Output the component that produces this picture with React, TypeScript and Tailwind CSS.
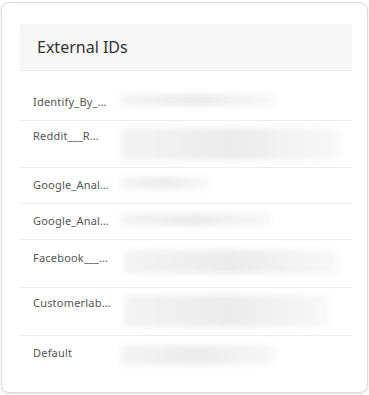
import React from 'react'

const rows = [
  { label: 'Identify_By_…', h: 'h-[12px]', w: 'w-[155px]', ml: '', pad: 'pt-[23px] pb-[10px]' },
  { label: 'Reddit___R…', h: 'h-[32px]', w: 'w-[222px]', ml: '', pad: 'py-[7px]' },
  { label: 'Google_Anal…', h: 'h-[12px]', w: 'w-[90px]', ml: '', pad: 'pt-[9px] pb-[10px]' },
  { label: 'Google_Anal…', h: 'h-[13px]', w: 'w-[150px]', ml: '', pad: 'pt-[9px] pb-[10px]' },
  { label: 'Facebook___…', h: 'h-[24px]', w: 'w-[226px]', ml: 'ml-[3px]', pad: 'pt-[10px] pb-[13px]' },
  { label: 'Customerlab…', h: 'h-[32px]', w: 'w-[206px]', ml: 'ml-[3px]', pad: 'pt-[7px] pb-[8px]' },
  { label: 'Default', h: 'h-[20px]', w: 'w-[155px]', ml: '', pad: 'pt-[9px] pb-[8px]' },
]

const App = () => {
  return (
    <div className="w-[369px] h-[395px] bg-white pt-[2px] pl-[1px]" style={{ fontFamily: '"Noto Sans", sans-serif' }}>
      <div className="w-[367px] h-[391px] border border-[#dcdcdc] rounded-[8px] shadow-[0_1px_2px_rgba(0,0,0,0.12)] pt-[21px] pl-[18px] pr-[15px] overflow-hidden">
        <div className="bg-[#f7f7f7] h-[47px] rounded-t-[3px] flex items-center pl-[17px] border-b border-[#ececec]">
          <h2 className="text-[16px] text-[#333] leading-none">External IDs</h2>
        </div>
        <div>
          {rows.map((r, i) => (
            <div key={i} className={`flex items-start px-[13px] ${r.pad} ${i < rows.length - 1 ? 'border-b border-[#ececec]' : ''}`}>
              <span className="w-[88px] shrink-0 text-[11px] leading-[16px] tracking-[0.2px] text-[#555] whitespace-nowrap">{r.label}</span>
              <div className={`${r.h} ${r.w} ${r.ml} bg-gradient-to-r from-[#f3f3f3] via-[#ebebeb] to-[#f8f8f8] blur-[3px] rounded-[3px]`} />
            </div>
          ))}
        </div>
      </div>
    </div>
  )
}

export default App
